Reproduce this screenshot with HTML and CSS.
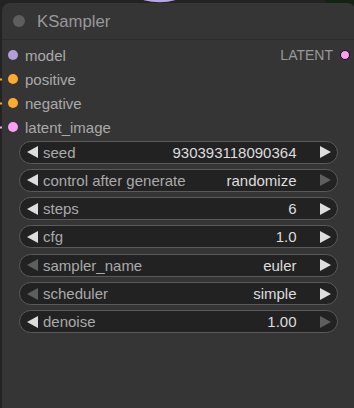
FILE: index.html
```html
<!DOCTYPE html>
<html lang="en">
<head>
  <meta charset="UTF-8">
  <meta name="viewport" content="width=device-width, initial-scale=1.0">
  <title>KSampler</title>
  <link rel="stylesheet" href="styles.css">
</head>
<body>
  <svg class="wires" width="354" height="408" viewBox="0 0 354 408">
    <path d="M144 -1 C 156 2, 166 2, 178 -2" stroke="#b9a6e6" stroke-width="2.5" fill="none"/>
    <rect x="325" y="0" width="29" height="4" fill="#142414"/>
    <line x1="0" y1="79.5" x2="4" y2="79.5" stroke="#ffa931" stroke-width="2"/>
    <line x1="0" y1="103.5" x2="4" y2="103.5" stroke="#ffa931" stroke-width="2"/>
    <line x1="0" y1="127.5" x2="4" y2="127.5" stroke="#ff9cf9" stroke-width="2"/>
  </svg>

  <div class="node">
    <div class="title">
      <span class="title-dot"></span>
      <span class="title-text">KSampler</span>
    </div>

    <div class="slots">
      <div class="slot-row">
        <div class="slot"><span class="dot model"></span>model</div>
        <div class="slot out">LATENT<span class="dot latent outline"></span></div>
      </div>
      <div class="slot-row">
        <div class="slot"><span class="dot cond"></span>positive</div>
      </div>
      <div class="slot-row">
        <div class="slot"><span class="dot cond"></span>negative</div>
      </div>
      <div class="slot-row">
        <div class="slot"><span class="dot latent"></span>latent_image</div>
      </div>
    </div>

    <div class="widgets">
      <div class="widget">
        <svg class="arrow" viewBox="0 0 11 12"><polygon points="11,0 11,12 0,6"/></svg>
        <span class="label">seed</span>
        <span class="value">930393118090364</span>
        <svg class="arrow" viewBox="0 0 11 12"><polygon points="0,0 0,12 11,6"/></svg>
      </div>
      <div class="widget">
        <svg class="arrow" viewBox="0 0 11 12"><polygon points="11,0 11,12 0,6"/></svg>
        <span class="label">control after generate</span>
        <span class="value">randomize</span>
        <svg class="arrow off" viewBox="0 0 11 12"><polygon points="0,0 0,12 11,6"/></svg>
      </div>
      <div class="widget">
        <svg class="arrow" viewBox="0 0 11 12"><polygon points="11,0 11,12 0,6"/></svg>
        <span class="label">steps</span>
        <span class="value">6</span>
        <svg class="arrow" viewBox="0 0 11 12"><polygon points="0,0 0,12 11,6"/></svg>
      </div>
      <div class="widget">
        <svg class="arrow" viewBox="0 0 11 12"><polygon points="11,0 11,12 0,6"/></svg>
        <span class="label">cfg</span>
        <span class="value">1.0</span>
        <svg class="arrow" viewBox="0 0 11 12"><polygon points="0,0 0,12 11,6"/></svg>
      </div>
      <div class="widget">
        <svg class="arrow off" viewBox="0 0 11 12"><polygon points="11,0 11,12 0,6"/></svg>
        <span class="label">sampler_name</span>
        <span class="value">euler</span>
        <svg class="arrow" viewBox="0 0 11 12"><polygon points="0,0 0,12 11,6"/></svg>
      </div>
      <div class="widget">
        <svg class="arrow off" viewBox="0 0 11 12"><polygon points="11,0 11,12 0,6"/></svg>
        <span class="label">scheduler</span>
        <span class="value">simple</span>
        <svg class="arrow" viewBox="0 0 11 12"><polygon points="0,0 0,12 11,6"/></svg>
      </div>
      <div class="widget">
        <svg class="arrow" viewBox="0 0 11 12"><polygon points="11,0 11,12 0,6"/></svg>
        <span class="label">denoise</span>
        <span class="value">1.00</span>
        <svg class="arrow off" viewBox="0 0 11 12"><polygon points="0,0 0,12 11,6"/></svg>
      </div>
    </div>
  </div>
</body>
</html>
```

FILE: styles.css
```css
body {
  margin: 0;
  background-color: #232323;
  font-family: "Liberation Sans", Arial, sans-serif;
  overflow: hidden;
  height: 408px;
}

.wires {
  position: absolute;
  left: 0;
  top: 0;
}

.node {
  position: relative;
  margin-top: 3px;
  margin-left: 2px;
  width: 353px;
  height: 420px;
  background-color: #353535;
  border-radius: 8px 8px 0 0;
}

.title {
  display: flex;
  align-items: center;
  height: 36px;
  padding-left: 11px;
  gap: 12px;
  border-bottom: 1px solid #2c2c2c;
}

.title-dot {
  width: 12px;
  height: 12px;
  border-radius: 50%;
  background-color: #5e5e5e;
}

.title-text {
  font-size: 16.7px;
  color: #999999;
  padding-top: 2px;
}

.slots {
  padding-top: 3px;
}

.slot-row {
  display: flex;
  justify-content: space-between;
  align-items: center;
  height: 24px;
}

.slot {
  display: flex;
  align-items: center;
  gap: 7px;
  padding-left: 6px;
  font-size: 15px;
  color: #aaaaaa;
}

.slot.out {
  padding-left: 0;
  padding-right: 5px;
  font-size: 14px;
  color: #999999;
}

.dot {
  width: 10px;
  height: 10px;
  border-radius: 50%;
  box-sizing: border-box;
}

.dot.model {
  background-color: #b39ddb;
}

.dot.cond {
  background-color: #ffa931;
}

.dot.latent {
  background-color: #ff9cf9;
}

.dot.outline {
  border: 1px solid #111111;
}

.widgets {
  display: flex;
  flex-direction: column;
  gap: 5.33px;
  margin: 1.5px 17px 0 17px;
}

.widget {
  display: flex;
  align-items: center;
  box-sizing: border-box;
  height: 23px;
  padding: 0 6px 0 6.5px;
  background-color: #222222;
  border: 1px solid #5a5a5a;
  border-radius: 12px;
  font-size: 15px;
}

.arrow {
  width: 11px;
  height: 12px;
  fill: #dddddd;
}

.arrow.off {
  fill: #5e5e5e;
}

.label {
  margin-left: 5.5px;
  color: #aaaaaa;
  flex: 1;
  white-space: nowrap;
}

.value {
  margin-right: 23.5px;
  color: #dddddd;
  white-space: nowrap;
}
```
